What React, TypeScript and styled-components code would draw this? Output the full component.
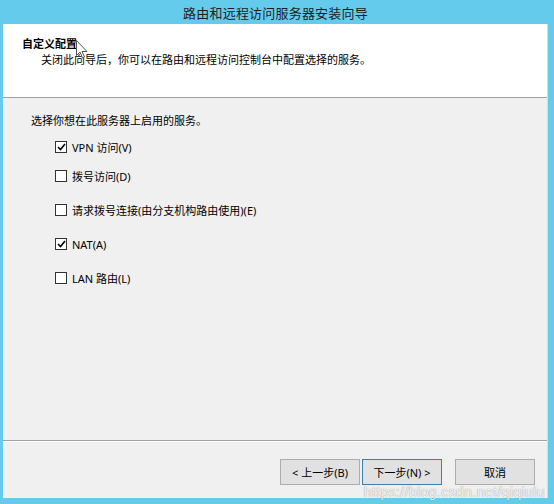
import styled, { createGlobalStyle } from "styled-components";

const font = `"Noto Sans", "Noto Sans CJK SC", sans-serif`;

const GlobalStyle = createGlobalStyle`
  html, body {
    margin: 0;
    padding: 0;
    background: #65cbed;
  }
  body {
    font-family: ${font};
    color: #000;
  }
`;

const Window = styled.div`
  position: relative;
  width: 554px;
  height: 504px;
  background: #65cbed;
  display: flex;
  flex-direction: column;
  padding: 0 6px 6px 3px;
  box-sizing: border-box;
  overflow: hidden;
`;

const TitleBar = styled.div`
  height: 24px;
  display: flex;
  align-items: center;
  justify-content: center;
  font-size: 13px;
  color: #1e1e1e;
  letter-spacing: 0.2px;
`;

const Panel = styled.div`
  flex: 1;
  display: flex;
  flex-direction: column;
  background: #f0f0f0;
  border-right: 1px solid #dcdcdc;
`;

const Header = styled.div`
  height: 74px;
  box-sizing: border-box;
  background: #fff;
  border-bottom: 1px solid #a0a0a0;
  padding: 12px 0 0 19px;
`;

const HeaderTitle = styled.div`
  font-size: 11px;
  font-weight: bold;
  line-height: 15px;
`;

const HeaderText = styled.div`
  font-size: 11px;
  line-height: 15px;
  padding: 1px 0 0 19px;
`;

const Body = styled.div`
  flex: 1;
  padding: 15px 0 0 28px;
`;

const Prompt = styled.div`
  font-size: 11px;
  line-height: 16px;
`;

const Options = styled.div`
  display: flex;
  flex-direction: column;
  padding-left: 24px;
  padding-top: 10px;
`;

const Option = styled.label<{ $gap: number }>`
  display: flex;
  align-items: center;
  gap: 5px;
  height: 16px;
  margin-top: ${(p) => p.$gap}px;
  font-size: 11px;
`;

const Box = styled.span`
  width: 12px;
  height: 12px;
  box-sizing: border-box;
  border: 1px solid #333;
  background: #fff;
  display: flex;
  align-items: center;
  justify-content: center;
`;

const Footer = styled.div`
  height: 58px;
  box-sizing: border-box;
  border-top: 1px solid #a0a0a0;
  box-shadow: inset 0 1px 0 #fff;
  display: flex;
  justify-content: flex-end;
  align-items: flex-start;
  padding: 18px 12px 0 0;
`;

const Button = styled.button<{ $default?: boolean; $space?: number }>`
  width: 80px;
  height: 26px;
  margin-left: ${(p) => p.$space ?? 0}px;
  background: #e1e1e1;
  border: 1px solid ${(p) => (p.$default ? "#3c7fb1" : "#adadad")};
  font-family: ${font};
  font-size: 11px;
  color: #000;
  padding: 0;
`;

const Watermark = styled.div`
  position: absolute;
  right: 9px;
  bottom: 4px;
  font-family: "Liberation Sans", Arial, sans-serif;
  font-size: 14px;
  color: rgba(255, 255, 255, 0.9);
  text-shadow: 0 0 1px rgba(90, 90, 90, 0.8);
  letter-spacing: 0.4px;
`;

const Cursor = styled.svg`
  position: absolute;
  left: 76px;
  top: 40px;
`;

const Check = () => (
  <svg width="9" height="8" viewBox="0 0 9 8">
    <path d="M1 4 L3.5 6.5 L8 1" fill="none" stroke="#000" strokeWidth="1.6" />
  </svg>
);

const options = [
  { label: "VPN 访问(V)", checked: true, gap: 0 },
  { label: "拨号访问(D)", checked: false, gap: 13 },
  { label: "请求拨号连接(由分支机构路由使用)(E)", checked: false, gap: 18 },
  { label: "NAT(A)", checked: true, gap: 18 },
  { label: "LAN 路由(L)", checked: false, gap: 18 },
];

export default function App() {
  return (
    <>
      <GlobalStyle />
      <Window>
        <TitleBar>路由和远程访问服务器安装向导</TitleBar>
        <Panel>
          <Header>
            <HeaderTitle>自定义配置</HeaderTitle>
            <HeaderText>关闭此向导后，你可以在路由和远程访问控制台中配置选择的服务。</HeaderText>
          </Header>
          <Body>
            <Prompt>选择你想在此服务器上启用的服务。</Prompt>
            <Options>
              {options.map((o) => (
                <Option key={o.label} $gap={o.gap}>
                  <Box>{o.checked && <Check />}</Box>
                  {o.label}
                </Option>
              ))}
            </Options>
          </Body>
          <Footer>
            <Button>&lt; 上一步(B)</Button>
            <Button $default $space={2}>
              下一步(N) &gt;
            </Button>
            <Button $space={13}>取消</Button>
          </Footer>
        </Panel>
        <Cursor width="12" height="19" viewBox="0 0 12 19">
          <path
            d="M0.5 0.5 L0.5 15.5 L4 12 L6.5 18 L8.5 17 L6 11.5 L11 11.5 Z"
            fill="#fff"
            stroke="#555"
            strokeWidth="1"
          />
        </Cursor>
        <Watermark>https://blog.csdn.net/qiqiulu</Watermark>
      </Window>
    </>
  );
}
